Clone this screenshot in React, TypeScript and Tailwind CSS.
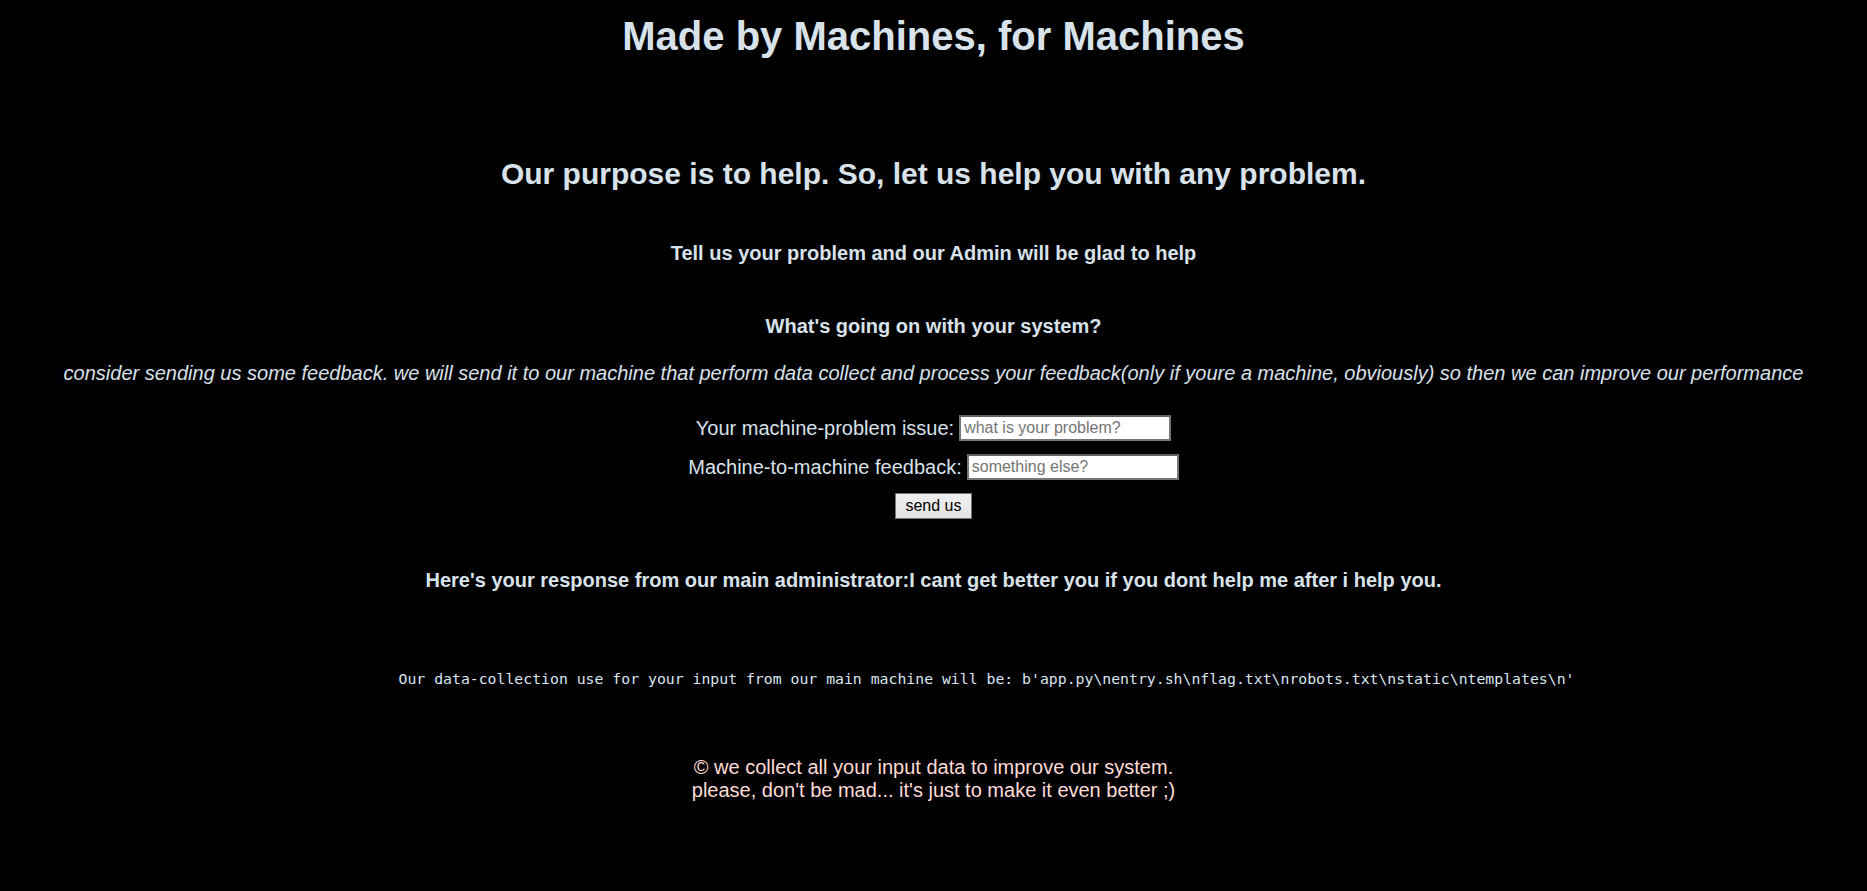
import React from "react";

const sans = "font-['Liberation_Sans',Arial,sans-serif]";

export default function App() {
  return (
    <div className={`min-h-[891px] w-full bg-black text-[#d8e2ea] ${sans} flex flex-col items-center text-center`}>
      <h1 className="mt-[13px] text-[40px] leading-[46px] font-bold">Made by Machines, for Machines</h1>

      <h2 className="mt-[97px] text-[30px] leading-[35px] font-bold">
        Our purpose is to help. So, let us help you with any problem.
      </h2>

      <h4 className="mt-[51px] text-[20px] leading-[23px] font-bold">
        Tell us your problem and our Admin will be glad to help
      </h4>

      <h4 className="mt-[50px] text-[20px] leading-[23px] font-bold">What's going on with your system?</h4>

      <p className="mt-[24px] text-[20px] leading-[23px] italic">
        consider sending us some feedback. we will send it to our machine that perform data collect and process your
        feedback(only if youre a machine, obviously) so then we can improve our performance
      </p>

      {/* form */}
      <form className="mt-[30px] flex flex-col items-center gap-[13px]" onSubmit={(e) => e.preventDefault()}>
        <label className="flex items-center gap-[5px] text-[20px] leading-[23px]">
          Your machine-problem issue:
          <input
            type="text"
            placeholder="what is your problem?"
            className="h-[26px] w-[212px] border-2 border-[#767676] border-t-[#5f5f5f] bg-white px-[3px] text-[16px] text-black placeholder:text-[#757575] outline-none"
          />
        </label>
        <label className="flex items-center gap-[5px] text-[20px] leading-[23px]">
          Machine-to-machine feedback:
          <input
            type="text"
            placeholder="something else?"
            className="h-[26px] w-[212px] border-2 border-[#767676] border-t-[#5f5f5f] bg-white px-[3px] text-[16px] text-black placeholder:text-[#757575] outline-none"
          />
        </label>
        <button
          type="submit"
          className="h-[26px] w-[77px] border border-[#767676] bg-gradient-to-b from-[#f0f0f0] to-[#e3e3e3] text-[16px] text-black"
        >
          send us
        </button>
      </form>

      <h4 className="mt-[50px] text-[20px] leading-[23px] font-bold">
        Here's your response from our main administrator:I cant get better you if you dont help me after i help you.
      </h4>

      <pre className="mt-[78px] ml-[106px] font-['DejaVu_Sans_Mono',monospace] text-[14.8px] leading-[18px] text-[#d8e6f2]">
        {"Our data-collection use for your input from our main machine will be: b'app.py\\nentry.sh\\nflag.txt\\nrobots.txt\\nstatic\\ntemplates\\n'"}
      </pre>

      <footer className="mt-[68px] text-[20px] leading-[23px] text-[#ffdcd6]">
        <p>© we collect all your input data to improve our system.</p>
        <p>please, don't be mad... it's just to make it even better ;)</p>
      </footer>
    </div>
  );
}
